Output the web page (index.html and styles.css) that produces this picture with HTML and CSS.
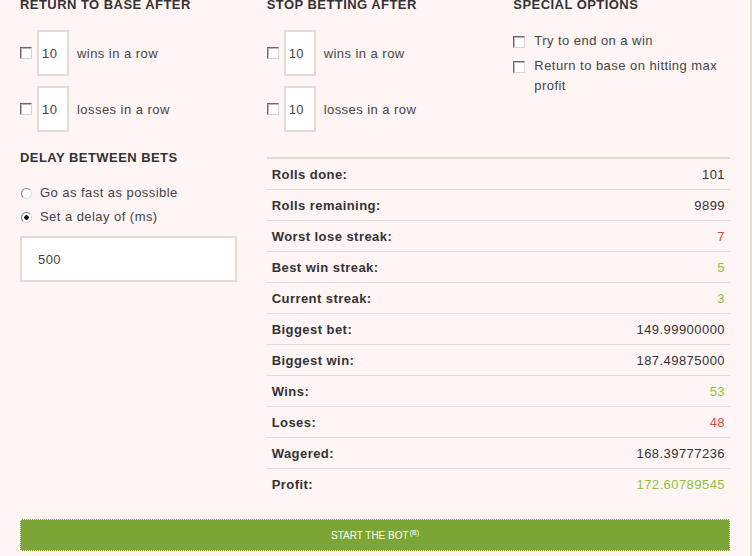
FILE: index.html
```html
<!DOCTYPE html>
<html lang="en">
<head>
    <meta charset="UTF-8">
    <meta name="viewport" content="width=device-width, initial-scale=1.0">
    <title>Auto Bet Settings</title>
    <link rel="stylesheet" href="styles.css">
</head>
<body>
    <div class="panel">
        <div class="section">
            <h3>Return to base after</h3>
            <div class="streak-row">
                <input type="checkbox" class="box">
                <input type="text" class="num-input" value="10">
                <span>wins in a row</span>
            </div>
            <div class="streak-row">
                <input type="checkbox" class="box">
                <input type="text" class="num-input" value="10">
                <span>losses in a row</span>
            </div>
        </div>
        <div class="section">
            <h3>Stop betting after</h3>
            <div class="streak-row">
                <input type="checkbox" class="box">
                <input type="text" class="num-input" value="10">
                <span>wins in a row</span>
            </div>
            <div class="streak-row">
                <input type="checkbox" class="box">
                <input type="text" class="num-input" value="10">
                <span>losses in a row</span>
            </div>
        </div>
        <div class="section">
            <h3>Special options</h3>
            <label class="option"><input type="checkbox" class="box"><span>Try to end on a win</span></label>
            <label class="option"><input type="checkbox" class="box"><span>Return to base on hitting max profit</span></label>
        </div>

        <div class="section">
            <h3>Delay between bets</h3>
            <div class="radios">
                <label class="radio-row"><input type="radio" name="delay" class="dot"> Go as fast as possible</label>
                <label class="radio-row"><input type="radio" name="delay" class="dot" checked> Set a delay of (ms)</label>
            </div>
            <input type="text" class="delay-input" value="500">
        </div>
        <div class="stats">
            <table>
                <tr><td class="label">Rolls done:</td><td class="value">101</td></tr>
                <tr><td class="label">Rolls remaining:</td><td class="value">9899</td></tr>
                <tr><td class="label">Worst lose streak:</td><td class="value red">7</td></tr>
                <tr><td class="label">Best win streak:</td><td class="value green">5</td></tr>
                <tr><td class="label">Current streak:</td><td class="value green">3</td></tr>
                <tr><td class="label">Biggest bet:</td><td class="value">149.99900000</td></tr>
                <tr><td class="label">Biggest win:</td><td class="value">187.49875000</td></tr>
                <tr><td class="label">Wins:</td><td class="value green">53</td></tr>
                <tr><td class="label">Loses:</td><td class="value red">48</td></tr>
                <tr><td class="label">Wagered:</td><td class="value">168.39777236</td></tr>
                <tr><td class="label">Profit:</td><td class="value green">172.60789545</td></tr>
            </table>
        </div>

        <button type="button" class="start-btn">START THE BOT<sup>(B)</sup></button>
    </div>
</body>
</html>
```

FILE: styles.css
```css
html, body {
    height: 100%;
}
body {
    margin: 0;
    background: #fff5f5;
    border-right: 2px solid #e4ded4;
    box-sizing: border-box;
    font-family: "Liberation Sans", Arial, sans-serif;
    font-size: 13px;
    letter-spacing: 0.45px;
    color: #444;
    overflow: hidden;
}
.panel {
    display: grid;
    grid-template-columns: repeat(3, 1fr);
    column-gap: 30px;
    row-gap: 18px;
    padding: 0 20px;
    margin-top: -3px;
}
.section h3 {
    margin: 0;
    font-size: 13px;
    line-height: 16px;
    text-transform: uppercase;
    color: #333;
}
.streak-row {
    display: flex;
    align-items: center;
    margin-top: 10px;
}
.section h3 + .streak-row {
    margin-top: 17px;
}
.box {
    -webkit-appearance: none;
    appearance: none;
    width: 12px;
    height: 12px;
    margin: 0;
    flex-shrink: 0;
    background: #fff;
    border: 1px solid;
    border-color: #6a6a6a #d4d4d4 #d4d4d4 #6a6a6a;
    box-shadow: inset 1px 1px 0 #b8b8b8;
}
.num-input {
    width: 32px;
    height: 46px;
    box-sizing: border-box;
    margin: 0 8px 0 5px;
    padding: 0 0 0 3px;
    border: 2px solid #e2dbd1;
    background: #fff;
    font-family: inherit;
    font-size: 13px;
    letter-spacing: 0.45px;
    color: #444;
    outline: none;
}
.option {
    display: flex;
    align-items: flex-start;
    line-height: 20px;
    margin-top: 5px;
}
.section h3 + .option {
    margin-top: 18px;
}
.option .box {
    margin: 5px 9px 0 0;
}
.radios {
    margin-top: 17px;
}
.radio-row {
    display: flex;
    align-items: center;
    line-height: 20px;
    margin-bottom: 4px;
}
.dot {
    -webkit-appearance: none;
    appearance: none;
    width: 11px;
    height: 11px;
    margin: 0 8px 0 1px;
    border-radius: 50%;
    border: 1px solid;
    border-color: #808080 #dcdcdc #dcdcdc #808080;
    background: #fff;
}
.dot:checked {
    background: radial-gradient(circle, #111 0, #111 2px, #fff 2.5px);
}
.delay-input {
    display: block;
    width: 100%;
    height: 46px;
    box-sizing: border-box;
    margin-top: 9px;
    padding: 0 0 0 16px;
    border: 2px solid #e2dbd1;
    background: #fff;
    font-family: inherit;
    font-size: 13px;
    letter-spacing: 0.45px;
    color: #444;
    outline: none;
}
.stats {
    grid-column: 2 / 4;
    margin-top: 7px;
}
.stats table {
    width: 100%;
    border-collapse: collapse;
    border-top: 2px solid #e2dbd1;
}
.stats td {
    height: 30px;
    padding: 0 5px;
    border-bottom: 1px solid #e4dcd4;
    color: #333;
}
.stats tr:last-child td {
    border-bottom: none;
}
.stats .label {
    font-weight: bold;
}
.stats .value {
    text-align: right;
}
.stats .red {
    color: #e04848;
}
.stats .green {
    color: #8cc43f;
}
.start-btn {
    grid-column: 1 / 4;
    margin-top: 2px;
    height: 32px;
    background: #7ba636;
    border: 1px dotted #e8f0dc;
    color: #fff;
    font-family: inherit;
    font-size: 10px;
    letter-spacing: 0;
    cursor: pointer;
}
.start-btn sup {
    font-size: 7px;
    margin-left: 1px;
}
```
